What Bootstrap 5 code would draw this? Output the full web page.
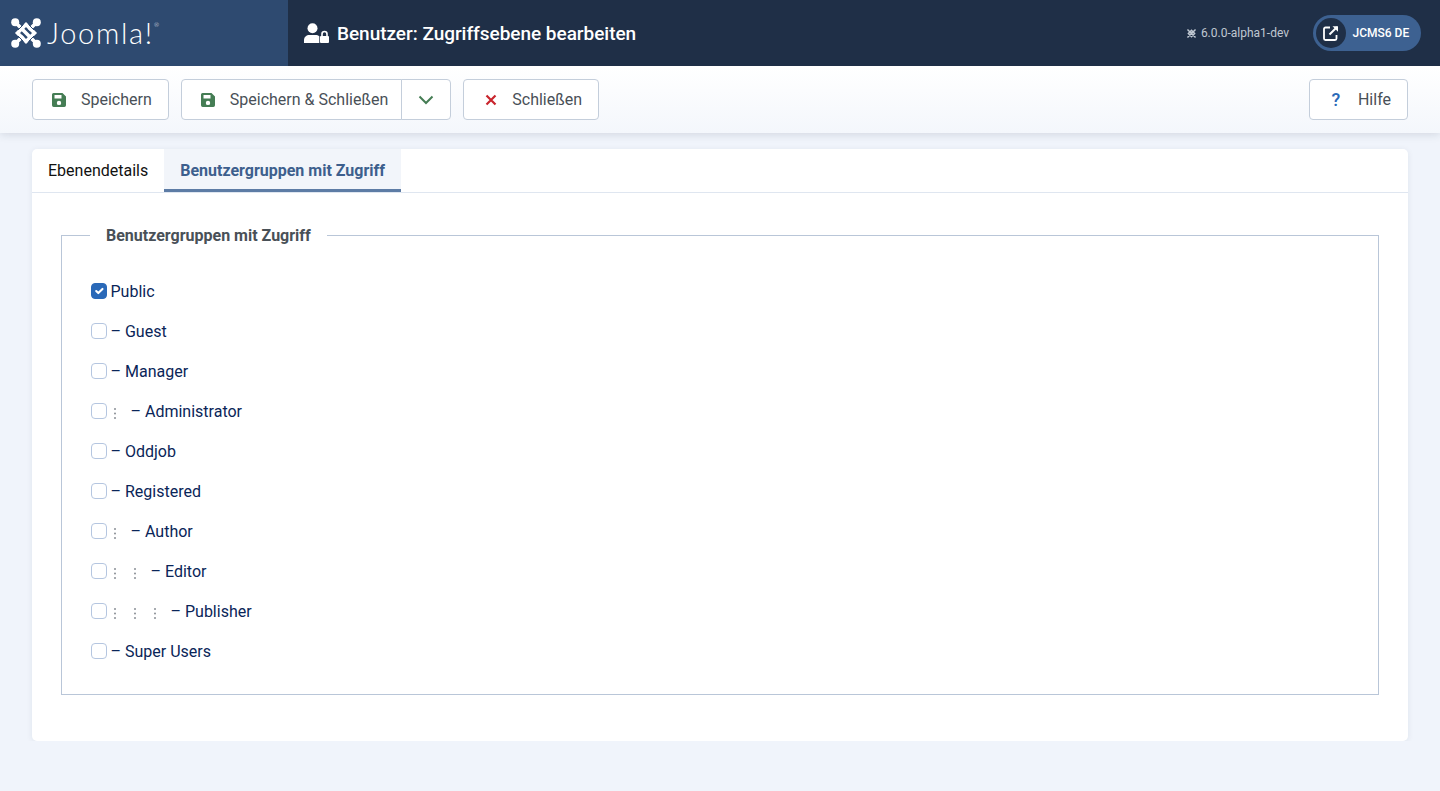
<!DOCTYPE html>
<html lang="de">
<head>
  <meta charset="UTF-8" />
  <title>Benutzer: Zugriffsebene bearbeiten</title>
  <meta name="viewport" content="width=device-width, initial-scale=1" />
  <link href="https://cdn.jsdelivr.net/npm/bootstrap@5.3.0/dist/css/bootstrap.min.css" rel="stylesheet" />
  <style>
    body { background-color: #f0f4fb; font-family: Roboto, "Liberation Sans", sans-serif; color: #495057; font-size: 16px; }
    .top-bar { height: 66px; background: #1f2f47; }
    .brand-box { width: 288px; height: 66px; background: #2e4a70; padding-left: 11px; }
    .brand-word { font-family: Lato, sans-serif; font-weight: 300; font-size: 29px; color: #fff; margin-left: 6px; letter-spacing: 1.7px; line-height: 1; position: relative; top: -1px; }
    .brand-word sup { font-size: 6px; top: -17px; margin-left: 0; letter-spacing: 0; }
    .page-head { font-size: 19px; font-weight: 500; color: #fff; margin: 0 0 0 8px; line-height: 1; letter-spacing: -0.03px; }
    .version-txt { font-size: 12px; color: #c0c8d2; margin-right: 24px; }
    .site-pill { width: 108px; height: 36px; border-radius: 18px; background: #3d6191; color: #fff; font-size: 12px; font-weight: 500; margin-right: 19px; padding-left: 1px; }
    .site-pill-icon { width: 30px; height: 30px; border-radius: 50%; background: #1f2f47; margin-left: 2px; margin-right: 6.5px; }
    .tool-bar { height: 67px; padding: 13px 32px 0; background: linear-gradient(180deg, #fff, #f4f7fc); box-shadow: 0 2px 8px rgba(31, 47, 71, .13); position: relative; }
    .tool-btn { height: 41px; background: #fff; border: 1px solid #c4cedb; border-radius: 4px; color: #495057; font-size: 16px; display: flex; align-items: center; padding: 0; line-height: 1; }
    .tool-btn:hover { background: #fff; color: #495057; border-color: #c4cedb; }
    .tool-ico { width: 16px; height: 16px; flex: none; margin-left: 18px; margin-right: 14px; }
    .btn-lbl { padding-right: 16px; }
    .save-split { border-radius: 4px 0 0 4px; }
    .save-split .btn-lbl { padding-right: 13px; }
    .drop-btn { width: 50px; justify-content: center; border-radius: 0 4px 4px 0; margin-left: -1px; }
    .close-btn { margin-left: 12px; }
    .close-btn .tool-ico { width: 14px; height: 14px; margin-left: 20px; }
    .help-mark { margin-left: 21px; margin-right: 17px; width: 10px; color: #2a69b8; font-size: 18px; font-weight: 500; }
    .main-card { margin: 16px 32px 0; height: 592px; background: #fff; border-radius: 5px; box-shadow: 0 1px 6px rgba(31, 47, 71, .08); overflow: hidden; }
    .tab-strip { height: 44px; border-bottom: 1px solid #dfe6f0; }
    .tab-item { height: 43px; padding: 0 16px; display: flex; align-items: center; font-size: 16px; color: #111; }
    .tab-item.on { background: #f2f5fa; color: #3d5f8d; font-weight: 700; border-bottom: 3px solid #5d7ca5; padding-top: 3px; }
    .group-box { margin: 29px 29px 0; height: 473px; border: 1px solid #b9c6d8; padding: 0 29px; }
    .group-box legend { float: none; width: auto; font-size: 16px; font-weight: 700; color: #495057; padding: 2px 16px 0; margin: 0 0 0 -1px; line-height: 24px; }
    .group-row { height: 40px; display: flex; align-items: center; color: #0a2558; font-size: 16px; }
    .group-row:first-of-type { margin-top: 24px; }
    .group-check { width: 16px; height: 16px; margin: -1px 3.5px 1px 0; flex: none; border: 1px solid #b5c6e0; border-radius: 4px; box-shadow: none; }
    .group-check:checked { background-color: #2a69b8; border-color: #2a69b8; }
    .tree-dots { width: 20px; flex: none; padding-left: 2px; position: relative; top: 1px; display: flex; align-items: center; }
  </style>
</head>
<body>

<!-- Header -->
<header class="top-bar d-flex align-items-center">
  <div class="brand-box d-flex align-items-center">
    <svg width="30" height="30" viewBox="0 0 30 30" fill="none">
      <g stroke="#fff" stroke-width="3.6">
        <path d="M15 6.5 L23.5 15 L15 23.5 L6.5 15 Z" />
        <path d="M5 5 L18 18 M25 5 L18 12 M25 25 L12 12 M5 25 L12 18" />
      </g>
      <g stroke="#2e4a70" stroke-width="1">
        <path d="M12.5 6.5 L7 12 M17.5 23.5 L23 18 M17.5 6.5 L23 12 M12.5 23.5 L7 18" />
        <path d="M10.5 15 L15 19.5 M19.5 15 L15 10.5" />
      </g>
      <g fill="#fff">
        <circle cx="4.2" cy="4.2" r="4" />
        <circle cx="25.8" cy="4.2" r="4" />
        <circle cx="4.2" cy="25.8" r="4" />
        <circle cx="25.8" cy="25.8" r="4" />
      </g>
    </svg>
    <span class="brand-word">Joomla!<sup>®</sup></span>
  </div>
  <svg class="ms-3" width="25" height="20" viewBox="0 0 25 20" fill="#fff">
    <circle cx="8.5" cy="5.2" r="5" />
    <path d="M0 20 v-3 C0 14 2.5 12 5.5 12 h6 c1.4 0 2.8 .4 3.8 1.2 V20 Z" />
    <path d="M17.2 13 v-2 a3.3 3.3 0 0 1 6.6 0 v2 h-1.6 v-2 a1.7 1.7 0 0 0 -3.4 0 v2 Z" />
    <rect x="16" y="13" width="9" height="7" rx="1" />
  </svg>
  <h1 class="page-head">Benutzer: Zugriffsebene bearbeiten</h1>
  <div class="ms-auto d-flex align-items-center">
    <span class="version-txt d-flex align-items-center">
      <svg class="me-1" width="11" height="11" viewBox="0 0 30 30" fill="none" stroke="#c0c8d2" stroke-width="4"><path d="M15 6.5 L23.5 15 L15 23.5 L6.5 15 Z M4 4 L26 26 M26 4 L4 26" /></svg>
      6.0.0-alpha1-dev
    </span>
    <div class="site-pill d-flex align-items-center">
      <span class="site-pill-icon d-flex align-items-center justify-content-center">
        <svg width="16" height="16" viewBox="0 0 16 16" fill="none" stroke="#fff" stroke-width="1.8">
          <path d="M7 2.5 H2.5 a1.5 1.5 0 0 0 -1.5 1.5 V13.5 a1.5 1.5 0 0 0 1.5 1.5 H12 a1.5 1.5 0 0 0 1.5 -1.5 V10" />
          <path d="M6.5 9.5 L14 2" stroke-width="2" />
          <path d="M9.5 1.2 H15 V6.7 Z" fill="#fff" stroke="none" />
        </svg>
      </span>
      JCMS6 DE
    </div>
  </div>
</header>

<!-- Toolbar -->
<nav class="tool-bar d-flex">
  <button class="btn tool-btn" type="button">
    <svg class="tool-ico" viewBox="0 0 16 16"><path fill="#457d54" fill-rule="evenodd" d="M2.5 1 H11.5 L15 4.5 V13.3 A1.7 1.7 0 0 1 13.3 15 H2.7 A1.7 1.7 0 0 1 1 13.3 V2.5 A1.5 1.5 0 0 1 2.5 1 Z M3.5 3 V6.5 H10.5 V3 Z M8 8.7 A2.2 2.2 0 1 0 8 13.1 A2.2 2.2 0 1 0 8 8.7 Z" /></svg>
    <span class="btn-lbl">Speichern</span>
  </button>
  <div class="d-flex ms-2 ps-1">
    <button class="btn tool-btn save-split" type="button">
      <svg class="tool-ico" viewBox="0 0 16 16"><path fill="#457d54" fill-rule="evenodd" d="M2.5 1 H11.5 L15 4.5 V13.3 A1.7 1.7 0 0 1 13.3 15 H2.7 A1.7 1.7 0 0 1 1 13.3 V2.5 A1.5 1.5 0 0 1 2.5 1 Z M3.5 3 V6.5 H10.5 V3 Z M8 8.7 A2.2 2.2 0 1 0 8 13.1 A2.2 2.2 0 1 0 8 8.7 Z" /></svg>
      <span class="btn-lbl">Speichern &amp; Schließen</span>
    </button>
    <button class="btn tool-btn drop-btn" type="button" aria-label="Mehr">
      <svg width="16" height="10" viewBox="0 0 16 10" fill="none" stroke="#457d54" stroke-width="2"><path d="M1.5 1.5 L8 8 L14.5 1.5" /></svg>
    </button>
  </div>
  <button class="btn tool-btn close-btn" type="button">
    <svg class="tool-ico" viewBox="0 0 14 14" fill="none" stroke="#c9252d" stroke-width="2.2"><path d="M2.5 2.5 L11.5 11.5 M11.5 2.5 L2.5 11.5" /></svg>
    <span class="btn-lbl">Schließen</span>
  </button>
  <button class="btn tool-btn ms-auto" type="button">
    <span class="help-mark">?</span>
    <span class="btn-lbl">Hilfe</span>
  </button>
</nav>

<!-- Content -->
<main class="main-card">
  <div class="tab-strip d-flex">
    <div class="tab-item">Ebenendetails</div>
    <div class="tab-item on">Benutzergruppen mit Zugriff</div>
  </div>
  <fieldset class="group-box" id="groupBox">
    <legend>Benutzergruppen mit Zugriff</legend>
  </fieldset>
</main>

<script>
  const groups = [
    ["Public", 0, true, false],
    ["Guest", 0, false, true],
    ["Manager", 0, false, true],
    ["Administrator", 1, false, true],
    ["Oddjob", 0, false, true],
    ["Registered", 0, false, true],
    ["Author", 1, false, true],
    ["Editor", 2, false, true],
    ["Publisher", 3, false, true],
    ["Super Users", 0, false, true]
  ];
  const dots = '<span class="tree-dots"><svg width="4" height="13" viewBox="0 0 4 13" fill="#8a8f96"><circle cx="2" cy="2" r="1"/><circle cx="2" cy="6.5" r="1"/><circle cx="2" cy="11" r="1"/></svg></span>';
  const box = document.getElementById("groupBox");
  groups.forEach(([name, level, checked, dash]) => {
    const row = document.createElement("div");
    row.className = "group-row";
    row.innerHTML = `<input class="form-check-input group-check" type="checkbox" ${checked ? "checked" : ""}>`
      + dots.repeat(level)
      + `<span>${dash ? "– " : ""}${name}</span>`;
    box.appendChild(row);
  });
</script>

</body>
</html>
